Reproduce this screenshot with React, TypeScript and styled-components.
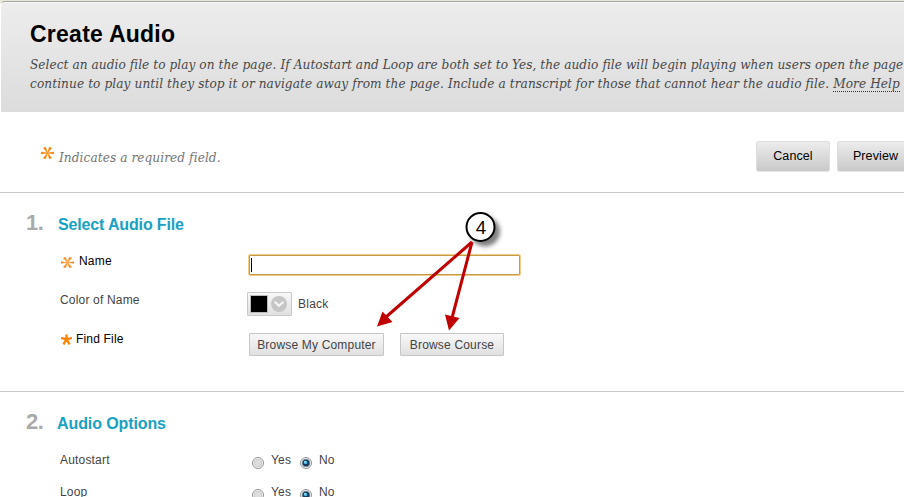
import React from "react";
import styled, { createGlobalStyle } from "styled-components";

const Global = createGlobalStyle`
  * { box-sizing: border-box; }
  html, body { margin: 0; padding: 0; overflow: hidden; background: #fff; }
  button { font-family: inherit; margin: 0; }
`;

const Page = styled.main`
  position: relative;
  width: 904px;
  height: 497px;
  overflow: hidden;
  background: #fff;
  color: #444;
  font: 12px/16px "Liberation Sans", Arial, sans-serif;
  letter-spacing: 0.18px;
  white-space: nowrap;
`;

const TopStrip = styled.div`
  height: 5px;
  margin-bottom: -4px;
  background: #e9e6da;
`;

const Header = styled.header`
  position: relative;
  height: 111px;
  padding: 19px 0 0 29px;
  border-top: 1px solid #a3a3a0;
  border-left: 1px solid #fff;
  border-top-left-radius: 5px;
  background: linear-gradient(#ededed, #dcdcdc);
  box-shadow: inset 0 1px #fafafa;
`;

const Title = styled.h1`
  margin: 0;
  color: #000;
  font-size: 23px;
  line-height: 26px;
  letter-spacing: 0.25px;
`;

const Serif = styled.div<{ $spacing: number; $color?: string }>`
  font-family: "DejaVu Serif Condensed", "DejaVu Serif", serif;
  font-stretch: condensed;
  font-style: italic;
  font-size: 13.5px;
  line-height: 19px;
  letter-spacing: ${(p) => p.$spacing}px;
  color: ${(p) => p.$color ?? "#484848"};
`;

const Intro = styled.div`
  margin-top: 8px;
`;

const HelpLink = styled.a`
  display: inline-block;
  height: 18px;
  border-bottom: 1px dotted #333;
`;

const ActionBar = styled.section`
  display: flex;
  justify-content: space-between;
  height: 81px;
  padding: 29px 0 0 41px;
  border-bottom: 1px solid #c8c8c8;
`;

const RequiredNote = styled.div`
  display: flex;
  gap: 5px;
  padding-top: 7px;
`;

const Actions = styled.div`
  display: flex;
  gap: 7px;
  width: 148px;
`;

const ActionButton = styled.button`
  flex: none;
  width: 74px;
  height: 31px;
  padding: 0 0 1px;
  border: 1px solid #dedede;
  border-bottom-color: #e6e6e6;
  border-radius: 3px;
  background: linear-gradient(#ececec, #c9c9c9);
  color: #000;
  font-size: 12.5px;
  letter-spacing: 0.1px;

  &:last-child { padding-left: 3px; }
`;

const Step = styled.section<{ $height: number }>`
  height: ${(p) => p.$height}px;
  border-bottom: 1px solid #c8c8c8;
`;

const StepHeading = styled.div`
  display: flex;
  align-items: baseline;
  height: 50px;
  padding: 17px 0 0 26px;
`;

const StepNumber = styled.span<{ $width: number }>`
  width: ${(p) => p.$width}px;
  color: #aaa;
  font-size: 22px;
  line-height: 26px;
  font-weight: bold;
  letter-spacing: -0.4px;
`;

const StepTitle = styled.h2<{ $spacing: number }>`
  margin: 0;
  color: #17a2c4;
  font-size: 16px;
  line-height: 20px;
  letter-spacing: ${(p) => p.$spacing}px;
`;

const Row = styled.div<{ $height: number }>`
  display: grid;
  grid-template-columns: 187px 1fr;
  height: ${(p) => p.$height}px;
  padding-left: 60px;
`;

const Label = styled.div<{ $required?: boolean; $gap?: number; $top: number }>`
  display: flex;
  align-items: flex-start;
  gap: ${(p) => p.$gap ?? 0}px;
  padding-top: ${(p) => p.$top}px;
  padding-left: ${(p) => (p.$required ? 1 : 0)}px;
  color: ${(p) => (p.$required ? "#000" : "#444")};
`;

const Field = styled.div<{ $top: number; $left?: number }>`
  display: flex;
  align-items: flex-start;
  padding: ${(p) => p.$top}px 0 0 ${(p) => p.$left ?? 0}px;
`;

const NameInput = styled.div`
  width: 273px;
  height: 22px;
  padding: 3px 0 0 2px;
  border: 1px solid #f0cd86;
  border-radius: 2px;
  box-shadow: inset 0 0 0 1px #c79a45;
`;

const Caret = styled.div`
  width: 1px;
  height: 14px;
  background: #000;
`;

const ColorPicker = styled.div`
  display: flex;
  align-items: center;
  gap: 3px;
  width: 45px;
  height: 24px;
  margin-right: 6px;
  padding-left: 2px;
  border: 1px solid #c9c9c9;
  border-radius: 1px;
  background: linear-gradient(#f8f8f8, #e0e0e0);
`;

const Swatch = styled.div`
  width: 18px;
  height: 18px;
  border: 1px solid #bbb;
  background: #000;
`;

const ColorName = styled.span`
  padding-top: 4px;
  letter-spacing: 0.25px;
`;

const BrowseButton = styled.button<{ $width: number }>`
  width: ${(p) => p.$width}px;
  height: 23px;
  padding: 0;
  border: 1px solid #c6c6c6;
  border-radius: 1px;
  background: linear-gradient(#f8f8f8, #e0e0e0);
  color: #444;
  font-size: 12px;
  letter-spacing: 0.18px;
`;

const BrowseGroup = styled(Field)`
  gap: 16px;
`;

const Choice = styled.span<{ $width: number }>`
  display: flex;
  gap: 7px;
  width: ${(p) => p.$width}px;
`;

const Mark = styled.svg<{ $top: number }>`
  flex: none;
  display: block;
  margin-top: ${(p) => p.$top}px;
`;

const RadioIcon = styled.svg`
  flex: none;
  margin-top: 5px;
`;

const Callout = styled.svg`
  position: absolute;
  left: 360px;
  top: 200px;
  pointer-events: none;
`;

/* Six-armed asterisk whose arms widen towards the tips */
function Asterisk({ width, height, top, color }: { width: number; height: number; top: number; color: string }) {
  return (
    <Mark $top={top} width={width} height={height} viewBox="0 0 14 13" preserveAspectRatio="none">
      <path
        d="M7 6.5L0 5.5V7.5ZM7 6.5L14 5.5V7.5ZM7 6.5L2.6 1.1L4.9 .1ZM7 6.5L9.1 .1L11.4 1.1ZM7 6.5L2.6 11.9L4.9 12.9ZM7 6.5L9.1 12.9L11.4 11.9Z"
        fill={color}
        stroke={color}
        strokeWidth=".5"
      />
    </Mark>
  );
}

function Star() {
  return (
    <Mark $top={3} width="11" height="11" viewBox="0 0 11 11">
      <path d="M5.5 .5V6M0 4.2L5.5 5.2L11 4.2M5.5 5.2L2.4 10.4M5.5 5.2L8.6 10.4" stroke="#ff8200" strokeWidth="2.3" fill="none" />
    </Mark>
  );
}

function Radio({ checked }: { checked?: boolean }) {
  return (
    <RadioIcon width="12" height="12" viewBox="0 0 12 12">
      <circle cx="6" cy="6" r="5.5" fill="#f8f8f8" stroke="#929292" />
      <circle cx="6" cy="6" r="3.8" fill={checked ? "#173753" : "#dedede"} stroke={checked ? "#738a9b" : "#c2c2c2"} strokeWidth=".8" />
      {checked && <circle cx="5.6" cy="5.5" r="1.8" fill="#45b8e4" />}
      {checked && <circle cx="5" cy="4.8" r=".8" fill="#d4f3ff" />}
    </RadioIcon>
  );
}

function OptionRow({ label }: { label: string }) {
  return (
    <Row $height={32}>
      <Label $top={10}>{label}</Label>
      <Field $top={10} $left={5}>
        <Choice $width={48}><Radio />Yes</Choice>
        <Choice $width={50}><Radio checked />No</Choice>
      </Field>
    </Row>
  );
}

export default function App() {
  return (
    <Page>
      <Global />
      <TopStrip />
      <Header>
        <Title>Create Audio</Title>
        <Intro>
          <Serif $spacing={0.05}>
            Select an audio file to play on the page. If Autostart and Loop are both set to Yes, the audio file will begin playing when users open the page
          </Serif>
          <Serif $spacing={0.084}>
            continue to play until they stop it or navigate away from the page. Include a transcript for those that cannot hear the audio file. <HelpLink>More Help</HelpLink>
          </Serif>
        </Intro>
      </Header>
      <ActionBar>
        <RequiredNote>
          <Asterisk width={13} height={12} top={-1} color="#ff8000" />
          <Serif $spacing={0.07} $color="#757575">Indicates a required field.</Serif>
        </RequiredNote>
        <Actions>
          <ActionButton>Cancel</ActionButton>
          <ActionButton>Preview</ActionButton>
        </Actions>
      </ActionBar>
      <Step $height={199}>
        <StepHeading>
          <StepNumber $width={32}>1.</StepNumber>
          <StepTitle $spacing={-0.15}>Select Audio File</StepTitle>
        </StepHeading>
        <Row $height={43}>
          <Label $required $gap={5} $top={10}><Asterisk width={13} height={11} top={4} color="#ff8a1c" />Name</Label>
          <Field $top={11} $left={1}><NameInput><Caret /></NameInput></Field>
        </Row>
        <Row $height={39}>
          <Label $top={6}>Color of Name</Label>
          <Field $top={6}>
            <ColorPicker>
              <Swatch />
              <svg width="16" height="16" viewBox="0 0 16 16">
                <circle cx="8" cy="8" r="8" fill="#c6c6c6" />
                <path d="M3.6 5.8L8 9.8L12.4 5.8" stroke="#f6f6f6" strokeWidth="2" fill="none" />
              </svg>
            </ColorPicker>
            <ColorName>Black</ColorName>
          </Field>
        </Row>
        <Row $height={50}>
          <Label $required $gap={4} $top={6}><Star />Find File</Label>
          <BrowseGroup $top={8} $left={2}>
            <BrowseButton $width={135}>Browse My Computer</BrowseButton>
            <BrowseButton $width={104}>Browse Course</BrowseButton>
          </BrowseGroup>
        </Row>
      </Step>
      <Step $height={130}>
        <StepHeading>
          <StepNumber $width={31}>2.</StepNumber>
          <StepTitle $spacing={-0.1}>Audio Options</StepTitle>
        </StepHeading>
        <OptionRow label="Autostart" />
        <OptionRow label="Loop" />
      </Step>
      <Callout width="180" height="140" viewBox="360 200 180 140">
        <defs>
          <filter id="soft" x="-40%" y="-40%" width="180%" height="180%">
            <feGaussianBlur stdDeviation="2" />
          </filter>
        </defs>
        <circle cx="485" cy="231.5" r="15" fill="#555" opacity=".75" filter="url(#soft)" />
        <circle cx="480.5" cy="227" r="14" fill="#fff" stroke="#000" strokeWidth="2" />
        <path d="M472 242L386 317M472 242L452 318" stroke="#c00000" strokeWidth="3" fill="none" />
        <path d="M377 326.5L382.5 311.5L392.5 322ZM449 330.5L445 314.5L459.5 318Z" fill="#c00000" />
        <text x="480.8" y="234" textAnchor="middle" fill="#000" fontFamily="Noto Sans" fontSize="18" letterSpacing="0">4</text>
      </Callout>
    </Page>
  );
}
